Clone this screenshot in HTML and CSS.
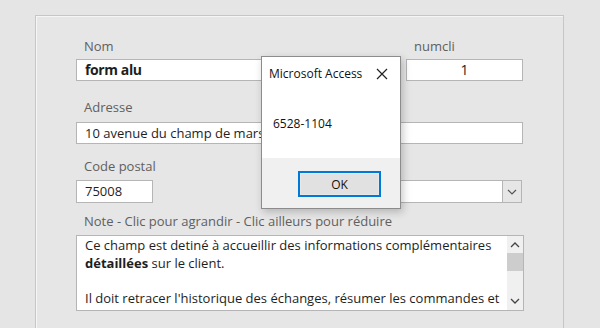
FILE: index.html
```html
<!DOCTYPE html>
<html lang="fr">
<head>
    <meta charset="UTF-8">
    <title>Fiche client</title>
    <link rel="stylesheet" href="styles.css">
</head>
<body>
    <div class="panel">
        <div class="row row-1">
            <div class="field field-nom">
                <div class="label">Nom</div>
                <div class="input bold">form alu</div>
            </div>
            <div class="field field-num">
                <div class="label">numcli</div>
                <div class="input center">1</div>
            </div>
        </div>

        <div class="row row-2">
            <div class="field field-adr">
                <div class="label">Adresse</div>
                <div class="input">10 avenue du champ de mars</div>
            </div>
        </div>

        <div class="row row-3">
            <div class="field field-cp">
                <div class="label">Code postal</div>
                <div class="input tall">75008</div>
            </div>
            <div class="field field-combo">
                <div class="label">&nbsp;</div>
                <div class="combo">
                    <div class="combo-text"></div>
                    <div class="combo-btn">
                        <svg width="10" height="6" viewBox="0 0 10 6"><path d="M1 1 L5 5 L9 1" fill="none" stroke="#555" stroke-width="1.2"/></svg>
                    </div>
                </div>
            </div>
        </div>

        <div class="row row-4">
            <div class="field field-note">
                <div class="label">Note - Clic pour agrandir - Clic ailleurs pour réduire</div>
                <div class="note">
                    <div class="note-text">
                        <p>Ce champ est detiné à accueillir des informations complémentaires <b>détaillées</b> sur le client.</p>
                        <p>Il doit retracer l'historique des échanges, résumer les commandes et</p>
                    </div>
                    <div class="scrollbar">
                        <svg class="arrow" width="10" height="6" viewBox="0 0 10 6"><path d="M1 5 L5 1 L9 5" fill="none" stroke="#444" stroke-width="1.3"/></svg>
                        <div class="thumb"></div>
                        <div class="track"></div>
                        <svg class="arrow" width="10" height="6" viewBox="0 0 10 6"><path d="M1 1 L5 5 L9 1" fill="none" stroke="#444" stroke-width="1.3"/></svg>
                    </div>
                </div>
            </div>
        </div>
    </div>

    <div class="dialog">
        <div class="dialog-title">
            <span>Microsoft Access</span>
            <svg width="12" height="12" viewBox="0 0 12 12"><path d="M1 1 L11 11 M11 1 L1 11" stroke="#222" stroke-width="1.2"/></svg>
        </div>
        <div class="dialog-body">6528-1104</div>
        <div class="dialog-foot">
            <button class="ok">OK</button>
        </div>
    </div>
</body>
</html>
```

FILE: styles.css
```css
body {
    margin: 0;
    background: #e5e5e5;
    font-family: "Open Sans", "Noto Sans", sans-serif;
    width: 600px;
    height: 328px;
    overflow: hidden;
}
.panel {
    margin: 15px 0 0 35px;
    width: 529px;
    height: 313px;
    border: 1px solid #c6c6c6;
    border-bottom: none;
    box-shadow: inset 1px 1px 0 #f6f6f6;
    background: #e6e6e6;
    padding: 21px 0 0 40px;
    box-sizing: border-box;
}
.row {
    display: flex;
}
.row-2 { margin-top: 17px; }
.row-3 { margin-top: 13px; }
.row-4 { margin-top: 9px; }
.label {
    height: 18px;
    line-height: 18px;
    padding-left: 8px;
    font-size: 13px;
    color: #606060;
    white-space: nowrap;
}
.input, .combo, .note {
    background: #fff;
    border: 1px solid #b5b5b5;
    box-sizing: border-box;
    color: #1e1e1e;
}
.input {
    height: 22px;
    line-height: 20px;
    padding-left: 8px;
    font-size: 13px;
    margin-top: 4px;
}
.input.bold {
    font-weight: 700;
    font-size: 14px;
    letter-spacing: -0.4px;
}
.input.center {
    text-align: center;
    padding-left: 0;
    font-size: 14px;
}
.field-nom { width: 300px; }
.field-num { width: 117px; margin-left: 30px; }
.field-adr { width: 447px; }
.row-2 .input { margin-top: 6px; }
.field-cp { width: 77px; }
.input.tall { height: 23px; line-height: 21px; margin-top: 5px; }
.field-combo { width: 251px; margin-left: 118px; }
.combo {
    display: flex;
    height: 23px;
    margin-top: 5px;
}
.combo-text { flex: 1; }
.combo-btn {
    width: 18px;
    background: #e6e6e6;
    border-left: 1px solid #b5b5b5;
    display: flex;
    align-items: center;
    justify-content: center;
}
.field-note { width: 448px; }
.note {
    display: flex;
    height: 76px;
    margin-top: 5px;
}
.note-text {
    flex: 1;
    padding: 1px 0 0 8px;
    font-size: 13px;
    line-height: 17.5px;
    overflow: hidden;
}
.note-text p {
    margin: 0 0 17.5px 0;
}
.scrollbar {
    width: 16px;
    background: #f0f0f0;
    display: flex;
    flex-direction: column;
    align-items: center;
}
.arrow {
    margin: 6px 0;
}
.scrollbar .arrow:first-child { margin-bottom: 5px; }
.thumb {
    width: 16px;
    height: 18px;
    background: #cdcdcd;
}
.track { flex: 1; }
.dialog {
    position: absolute;
    left: 261px;
    top: 56px;
    width: 140px;
    height: 153px;
    border: 1px solid #8c8c8c;
    box-sizing: border-box;
    background: #fff;
    box-shadow: 2px 3px 8px rgba(0, 0, 0, 0.22);
    display: flex;
    flex-direction: column;
}
.dialog-title {
    height: 33px;
    display: flex;
    align-items: center;
    justify-content: space-between;
    padding: 0 12px 0 7px;
    font-size: 12px;
    color: #111;
}
.dialog-body {
    height: 68px;
    padding-left: 11px;
    line-height: 68px;
    font-size: 12px;
    color: #111;
}
.dialog-foot {
    flex: 1;
    background: #f0f0f0;
    display: flex;
    justify-content: flex-end;
    padding: 13px 19px 0 0;
}
.ok {
    width: 83px;
    height: 26px;
    border: 2px solid #0078d7;
    box-shadow: inset 0 0 0 1px #e8e8e8;
    background: #e1e1e1;
    font-family: "Open Sans", "Noto Sans", sans-serif;
    font-size: 12px;
    color: #111;
    padding: 0;
}
```
